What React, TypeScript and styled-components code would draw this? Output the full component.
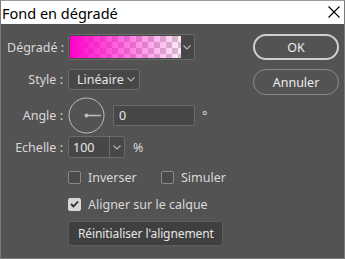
import React from "react";
import styled, { createGlobalStyle } from "styled-components";

const Global = createGlobalStyle`
  html, body { margin: 0; padding: 0; background: #535353; }
  body { width: 345px; height: 259px; overflow: hidden; }
  * { box-sizing: border-box; }
`;

const Window = styled.div`
  width: 345px;
  height: 259px;
  border: 1px solid #7a7a7a;
  border-top-color: #9a9a9a;
  background: #535353;
  display: flex;
  flex-direction: column;
  font-family: "Noto Sans", "Open Sans", sans-serif;
  white-space: nowrap;
`;

const TitleBar = styled.div`
  height: 23px;
  background: #ffffff;
  display: flex;
  align-items: center;
  justify-content: space-between;
  padding: 0 3px 0 1px;
  font-size: 14.5px;
  color: #000;
`;

const Close = styled.svg`
  width: 12px;
  height: 12px;
  margin-right: 1px;
  margin-top: -1px;
`;

const Body = styled.div`
  flex: 1;
  display: flex;
  justify-content: space-between;
  padding: 10px 5px 0 6px;
`;

const Form = styled.div`
  display: flex;
  flex-direction: column;
`;

const Row = styled.div<{ $mt?: number; $h?: number }>`
  display: flex;
  align-items: center;
  margin-top: ${(p) => p.$mt ?? 0}px;
  height: ${(p) => p.$h ?? 21}px;
`;

const Label = styled.div`
  width: 56px;
  text-align: right;
  font-size: 12.5px;
  color: #d8d8d8;
  margin-right: 5px;
`;

const GradientField = styled.div`
  width: 127px;
  height: 26px;
  display: flex;
  border: 1px solid #696969;
  border-radius: 2px;
  background: #474747;
  padding: 1px;
`;

const Swatch = styled.div`
  flex: 1;
  background-image: linear-gradient(to right, rgba(255, 0, 200, 1), rgba(255, 0, 200, 0.08)),
    linear-gradient(45deg, #cfcfcf 25%, transparent 25%, transparent 75%, #cfcfcf 75%),
    linear-gradient(45deg, #cfcfcf 25%, transparent 25%, transparent 75%, #cfcfcf 75%);
  background-color: #ffffff;
  background-size: 100% 100%, 12px 12px, 12px 12px;
  background-position: 0 0, 0 0, 6px 6px;
`;

const DropArea = styled.div`
  width: 12px;
  display: flex;
  align-items: center;
  justify-content: center;
`;

const Chevron = ({ color = "#b8b8b8" }: { color?: string }) => (
  <svg width="8" height="5" viewBox="0 0 8 5">
    <path d="M0.5 0.5 L4 4 L7.5 0.5" fill="none" stroke={color} strokeWidth="1.1" />
  </svg>
);

const Select = styled.div`
  width: 72px;
  height: 21px;
  border: 1px solid #6a6a6a;
  border-radius: 3px;
  background: #474747;
  display: flex;
  align-items: center;
  justify-content: space-between;
  padding: 0 4px 0 8px;
  color: #e6e6e6;
  font-size: 12.5px;
`;

const Dial = styled.svg`
  width: 37px;
  height: 37px;
  margin-right: 8px;
`;

const TextInput = styled.div<{ $w: number }>`
  width: ${(p) => p.$w}px;
  height: 21px;
  border: 1px solid #6a6a6a;
  border-radius: 2px;
  background: #474747;
  display: flex;
  align-items: center;
  padding-left: 5px;
  color: #e8e8e8;
  font-size: 12.5px;
`;

const Unit = styled.span<{ $ml: number }>`
  margin-left: ${(p) => p.$ml}px;
  color: #d8d8d8;
  font-size: 12.5px;
`;

const Combo = styled.div`
  width: 57px;
  height: 22px;
  border: 1px solid #6a6a6a;
  border-radius: 3px;
  background: #474747;
  display: flex;
  align-items: stretch;
  color: #e8e8e8;
  font-size: 12.5px;
`;

const ComboText = styled.div`
  flex: 1;
  display: flex;
  align-items: center;
  padding-left: 4px;
  border-right: 1px solid #6a6a6a;
`;

const ComboDrop = styled.div`
  width: 14px;
  display: flex;
  align-items: center;
  justify-content: center;
`;

const Indent = styled.div`
  width: 61px;
`;

const Check = styled.label<{ $w?: number }>`
  display: flex;
  align-items: center;
  width: ${(p) => (p.$w ? `${p.$w}px` : "auto")};
  color: #d8d8d8;
  font-size: 12.5px;
`;

const Box = styled.span<{ $on?: boolean }>`
  width: 13px;
  height: 13px;
  border-radius: 2px;
  border: 1px solid ${(p) => (p.$on ? "#d8d8d8" : "#8a8a8a")};
  background: ${(p) => (p.$on ? "#d6d6d6" : "#4a4a4a")};
  margin-right: 7px;
  display: flex;
  align-items: center;
  justify-content: center;
`;

const ResetButton = styled.div`
  width: 155px;
  height: 25px;
  border: 1px solid #5c5c5c;
  border-radius: 3px;
  background: #3f3f3f;
  color: #e6e6e6;
  font-size: 12px;
  letter-spacing: -0.1px;
  display: flex;
  align-items: center;
  padding-left: 9px;
`;

const Buttons = styled.div`
  display: flex;
  flex-direction: column;
  gap: 9px;
`;

const Pill = styled.div<{ $primary?: boolean }>`
  width: 86px;
  height: 26px;
  border-radius: 13px;
  border: ${(p) => (p.$primary ? "2px solid #cfcfcf" : "1px solid #8a8a8a")};
  display: flex;
  align-items: center;
  justify-content: center;
  color: #ececec;
  font-size: 12.5px;
`;

export default function App() {
  return (
    <>
      <Global />
      <Window>
        <TitleBar>
          <span>Fond en dégradé</span>
          <Close viewBox="0 0 12 12">
            <path d="M0.5 0.5 L11.5 11.5 M11.5 0.5 L0.5 11.5" stroke="#000" strokeWidth="1.1" />
          </Close>
        </TitleBar>
        <Body>
          <Form>
            <Row $h={26}>
              <Label>Dégradé :</Label>
              <GradientField>
                <Swatch />
                <DropArea>
                  <Chevron />
                </DropArea>
              </GradientField>
            </Row>
            <Row $mt={9} $h={21}>
              <Label>Style :</Label>
              <Select>
                <span>Linéaire</span>
                <Chevron />
              </Select>
            </Row>
            <Row $mt={7} $h={37}>
              <Label>Angle :</Label>
              <Dial viewBox="0 0 37 37">
                <circle cx="18.5" cy="18.5" r="17.5" fill="none" stroke="#bdbdbd" strokeWidth="1" />
                <circle cx="18.5" cy="18.5" r="2" fill="#bdbdbd" />
                <line x1="18.5" y1="18.5" x2="33" y2="18.5" stroke="#bdbdbd" strokeWidth="1.5" />
              </Dial>
              <TextInput $w={82}>0</TextInput>
              <Unit $ml={7}>°</Unit>
            </Row>
            <Row $mt={2} $h={22}>
              <Label>Echelle :</Label>
              <Combo>
                <ComboText>100</ComboText>
                <ComboDrop>
                  <Chevron />
                </ComboDrop>
              </Combo>
              <Unit $ml={8}>%</Unit>
            </Row>
            <Row $mt={8} $h={22}>
              <Indent />
              <Check $w={93}>
                <Box />
                Inverser
              </Check>
              <Check>
                <Box />
                Simuler
              </Check>
            </Row>
            <Row $mt={5} $h={22}>
              <Indent />
              <Check>
                <Box $on>
                  <svg width="9" height="8" viewBox="0 0 9 8">
                    <path d="M1 4 L3.5 6.5 L8 1.5" fill="none" stroke="#2a2a2a" strokeWidth="1.8" />
                  </svg>
                </Box>
                Aligner sur le calque
              </Check>
            </Row>
            <Row $mt={6} $h={25}>
              <Indent />
              <ResetButton>Réinitialiser l'alignement</ResetButton>
            </Row>
          </Form>
          <Buttons>
            <Pill $primary>OK</Pill>
            <Pill>Annuler</Pill>
          </Buttons>
        </Body>
      </Window>
    </>
  );
}
